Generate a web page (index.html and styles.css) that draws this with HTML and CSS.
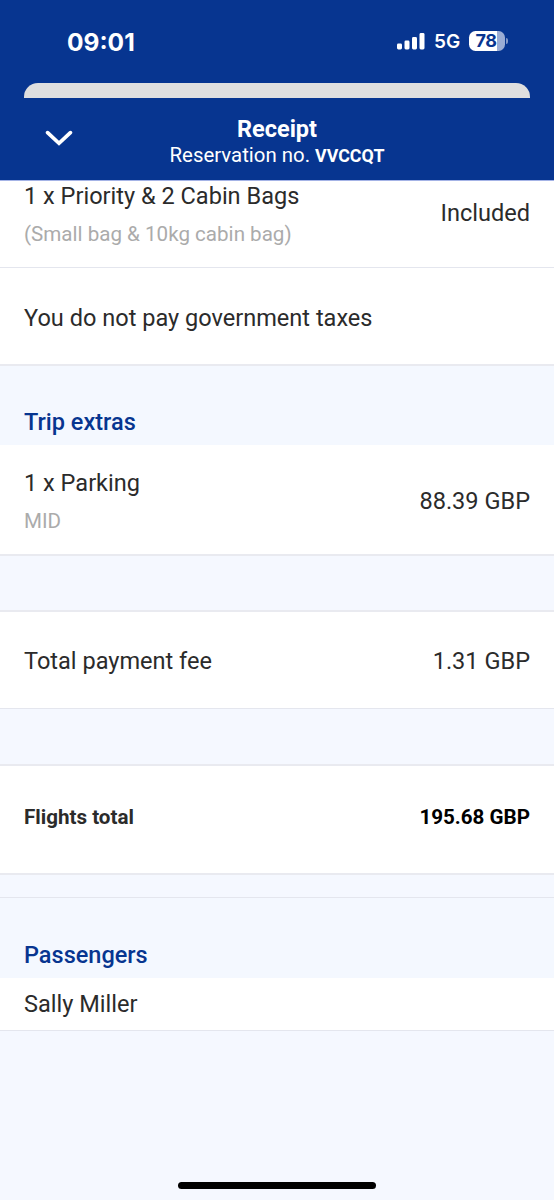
FILE: index.html
```html
<!DOCTYPE html>
<html lang="en">
<head>
<meta charset="utf-8">
<title>Receipt</title>
<link rel="stylesheet" href="styles.css">
</head>
<body>
<div class="screen">
  <div class="status">
    <span class="time">09:01</span>
    <div class="indicators">
      <svg class="signal" width="28" height="18" viewBox="0 0 28 18" fill="#fff">
        <rect x="0" y="11.5" width="5" height="6" rx="1.4"/>
        <rect x="7.5" y="8.5" width="5" height="9" rx="1.4"/>
        <rect x="15" y="5" width="5" height="12.5" rx="1.4"/>
        <rect x="22.5" y="1" width="5" height="16.5" rx="1.4"/>
      </svg>
      <span class="network">5G</span>
      <div class="battery"><span class="level">78</span></div>
      <span class="battery-tip"></span>
    </div>
  </div>
  <div class="sheet-edge"></div>
  <header class="header">
    <svg class="chevron" width="28" height="17" viewBox="0 0 28 17" fill="none" stroke="#fff" stroke-width="3.7" stroke-linecap="round" stroke-linejoin="miter"><path d="M2.6 2.6 14 13.3 25.4 2.6"/></svg>
    <h1 class="title">Receipt</h1>
    <p class="subtitle">Reservation no. <b class="code">VVCCQT</b></p>
  </header>
  <main class="content">
    <section class="row row-bags">
      <div class="item"><p class="text">1 x Priority &amp; 2 Cabin Bags</p><p class="note">(Small bag &amp; 10kg cabin bag)</p></div>
      <p class="text price">Included</p>
    </section>
    <section class="row row-taxes"><p class="text">You do not pay government taxes</p></section>
    <h2 class="heading heading-extras">Trip extras</h2>
    <section class="row row-parking">
      <div class="item"><p class="text">1 x Parking</p><p class="note">MID</p></div>
      <p class="text price">88.39 GBP</p>
    </section>
    <div class="gap"></div>
    <section class="row row-fee"><p class="text">Total payment fee</p><p class="text price">1.31 GBP</p></section>
    <div class="gap gap-total"></div>
    <section class="row row-total"><p class="total">Flights total</p><p class="total total-price">195.68 GBP</p></section>
    <div class="gap gap-small"></div>
    <h2 class="heading heading-passengers">Passengers</h2>
    <section class="row row-passenger"><p class="text">Sally Miller</p></section>
  </main>
  <footer class="home"><span class="home-bar"></span></footer>
</div>
</body>
</html>
```

FILE: styles.css
```css
* { box-sizing: border-box; margin: 0; padding: 0; }
body { font-family: Roboto, sans-serif; }
.screen { width: 554px; height: 1200px; display: flex; flex-direction: column; overflow: hidden; background: #f5f8ff; color: #2b2b2b; }
.screen > * { flex-shrink: 0; }
.status { height: 83px; padding: 27px 46px 0 67px; background: #073590; display: flex; justify-content: space-between; align-items: flex-start; color: #fff; }
.time { margin-top: 1px; font: bold 24.5px/28px Inter, sans-serif; }
.indicators { display: flex; align-items: center; height: 28px; }
.signal { margin-right: 9px; }
.network { width: 27px; margin-top: 1px; font: 600 19px/28px Inter, sans-serif; margin-right: 8px; white-space: nowrap; }
.battery { width: 36px; height: 20px; border-radius: 6.5px; background: linear-gradient(90deg, #fff 78%, #9badd4 78%); }
.level { display: block; text-align: center; padding-right: 2px; font: bold 18px/20px Inter, sans-serif; letter-spacing: -.5px; color: #073590; }
.battery-tip { width: 2px; height: 6px; margin-left: 1px; border-radius: 0 2px 2px 0; background: #8298c8; }
.sheet-edge { height: 15px; background: #073590; padding: 0 24px; }
.sheet-edge::before { content: ""; display: block; height: 15px; background: #dfdfdf; border-radius: 14px 14px 0 0; }
.header { height: 83px; padding-top: 17px; background: #073590; border-bottom: 1px solid #a4b3e6; color: #fff; text-align: center; position: relative; }
.chevron { position: absolute; left: 45px; top: 32px; }
.title { font-size: 23.5px; line-height: 28px; font-weight: 700; }
.subtitle { margin-top: 1px; font-size: 20.4px; line-height: 23px; }
.code { font-size: 17.8px; font-weight: 700; }
.row { display: flex; justify-content: space-between; align-items: center; padding: 0 24px; background: #fff; border-bottom: 1px solid #e4e6ee; }
.text { font-size: 23.55px; line-height: 28px; white-space: nowrap; }
.note { margin-top: 10px; font-size: 20.6px; line-height: 28px; color: #ababab; }
.row-bags { height: 87px; padding-bottom: 22px; align-items: flex-end; }
.row-bags .item { margin-bottom: -3px; }
.row-bags .price { margin-bottom: 18px; }
.row-taxes { height: 98px; border-bottom: 2px solid #e9eaf0; padding-top: 3px; }
.heading { padding: 0 24px; font-size: 23.5px; line-height: 28px; font-weight: 500; color: #073590; background: #f4f8ff; }
.heading-extras { height: 79px; padding-top: 42px; }
.row-parking { height: 111px; border-bottom: 2px solid #e9eaf0; }
.row-parking .item { margin-bottom: -5px; }
.row-parking .price { margin-bottom: -3px; }
.gap { height: 56px; border-bottom: 2px solid #e9eaf0; }
.row-fee { height: 97px; padding-top: 2px; }
.gap-total { height: 57px; }
.row-total { height: 109px; padding-bottom: 5px; border-bottom: 2px solid #e9eaf0; }
.total { font-size: 20.6px; line-height: 28px; font-weight: 700; }
.total-price { color: #000; }
.gap-small { height: 23px; border-bottom: 1px solid #e4e6ee; }
.heading-passengers { height: 80px; padding-top: 43px; }
.row-passenger { height: 53px; }
.home { margin-top: auto; height: 18px; display: flex; justify-content: center; }
.home-bar { width: 198px; height: 7px; border-radius: 4px; background: #000; }
```
